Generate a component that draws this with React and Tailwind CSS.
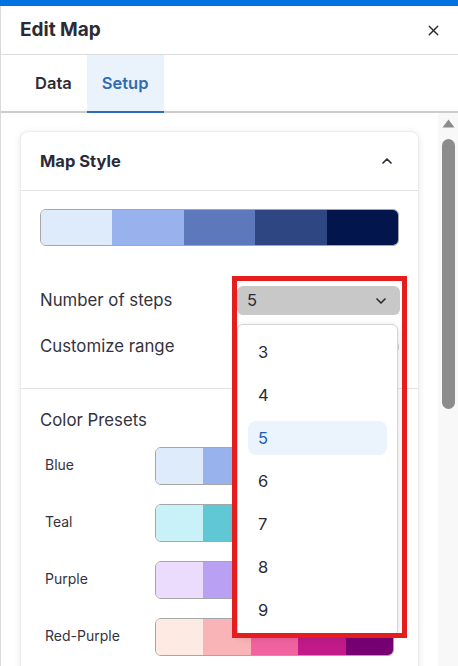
import React from 'react';
import { X, ChevronUp, ChevronDown } from 'lucide-react';

const mainScale = ['#deebfb', '#98b2ed', '#5e79bb', '#2e4682', '#02154c'];

const presets = [
  { name: 'Blue', colors: mainScale },
  { name: 'Teal', colors: ['#c8f2f7', '#60c7d4', '#2a9bb0', '#136b86', '#064058'] },
  { name: 'Purple', colors: ['#ebdcfe', '#b9a0f2', '#8a6ad8', '#5e3fb0', '#35207a'] },
  { name: 'Red-Purple', colors: ['#fdebe3', '#f9b4b8', '#f063a0', '#c21a88', '#770073'] },
];

const steps = [3, 4, 5, 6, 7, 8, 9];

const Swatch = ({ colors, className }) => (
  <div className={`flex overflow-hidden rounded-md border border-[#a6a6a6] ${className}`}>
    {colors.map((c) => (
      <div key={c} className="flex-1 h-full" style={{ backgroundColor: c }} />
    ))}
  </div>
);

const StepsSelect = () => (
  <div className="relative w-[163px] h-[29px] -mr-[1px]">
    <div className="h-full flex items-center justify-between pl-[10px] pr-[11px] rounded-md bg-[#c8c8c8] text-[16.5px] text-[#2b2b36]">
      <span>5</span>
      <ChevronDown className="w-4 h-4" strokeWidth={2.5} />
    </div>

    {/* open options list */}
    <div className="absolute left-0 top-[38px] w-[161px] h-[312px] z-10 bg-white border border-[#d4d4d4] rounded-md shadow-[0_2px_8px_rgba(0,0,0,0.12)] px-[10px] pt-[10px] flex flex-col gap-[9px]">
      {steps.map((n) => (
        <div
          key={n}
          className={`h-[34px] shrink-0 flex items-center pl-[10px] rounded-lg text-[16.5px] ${
            n === 5 ? 'bg-[#ebf3fc] text-[#1a5fb4]' : 'text-[#2b2b36]'
          }`}
        >
          {n}
        </div>
      ))}
    </div>

    {/* red annotation frame */}
    <div className="absolute -left-[5px] -top-[10px] w-[175px] h-[362px] z-20 border-[5px] border-[#e41e1e] pointer-events-none" />
  </div>
);

const App = () => {
  return (
    <div
      className="w-[458px] h-[666px] overflow-hidden bg-white flex flex-col"
      style={{ fontFamily: 'Inter, "Noto Sans", sans-serif' }}
    >
      <div className="h-[6px] bg-[#0073e0] shrink-0" />
      <div className="flex-1 flex flex-col border-l border-[#d9d9d9] min-h-0">
        {/* header */}
        <div className="h-[49px] shrink-0 flex items-center justify-between pl-[19px] pr-[16px] border-b border-[#dcdcdc]">
          <h1 className="text-[19px] font-bold text-[#2b2b36]">Edit Map</h1>
          <X className="w-[17px] h-[17px] text-[#2b2b36]" strokeWidth={2} />
        </div>

        {/* tabs */}
        <div className="h-[58px] shrink-0 flex pl-[19px] border-b-2 border-[#cccccc]">
          <div className="px-[15px] flex items-center text-[16.5px] font-semibold text-[#2b2b36]">Data</div>
          <div className="px-[15px] flex items-center text-[16.5px] font-semibold text-[#2e6db5] bg-[#eaf2fb] border-b-2 border-[#2e6db5] -mb-[2px]">
            Setup
          </div>
        </div>

        {/* content */}
        <div className="flex-1 flex min-h-0">
          <div className="flex-1 pl-[19px] pr-[19px] pt-[18px]">
            <div className="bg-white rounded-lg border border-[#ececec] shadow-[0_1px_6px_rgba(0,0,0,0.1)]">
              <div className="h-[59px] flex items-center justify-between px-[19px] border-b border-[#e3e3e3]">
                <h2 className="text-[16.5px] font-bold text-[#2b2b36]">Map Style</h2>
                <ChevronUp className="w-4 h-4 text-[#2b2b36] mr-[4px]" strokeWidth={2.5} />
              </div>

              <div className="px-[19px] pt-[18px] pb-[27px] border-b border-[#e3e3e3]">
                <Swatch colors={mainScale} className="h-[37px]" />
                <div className="mt-[40px] flex items-center justify-between">
                  <span className="text-[16.8px] text-[#33333d]">Number of steps</span>
                  <StepsSelect />
                </div>
                <div className="mt-[17px] h-[29px] flex items-center justify-between">
                  <span className="text-[16.8px] text-[#33333d]">Customize range</span>
                  <div className="w-[34px] h-[18px] rounded-full bg-[#cccccc]" />
                </div>
              </div>

              <div className="px-[19px] pt-[19px] pb-6">
                <div className="text-[16.8px] text-[#33333d] leading-6">Color Presets</div>
                <div className="mt-[15px] flex flex-col gap-[19px]">
                  {presets.map((p) => (
                    <div key={p.name} className="flex items-center">
                      <span className="w-[115px] pl-[5px] text-[14px] text-[#33333d] -mt-[4px]">{p.name}</span>
                      <Swatch colors={p.colors} className="w-[239px] h-[38px]" />
                    </div>
                  ))}
                </div>
              </div>
            </div>
          </div>

          {/* scrollbar */}
          <div className="w-[20px] shrink-0 bg-[#f8f8f8] flex flex-col items-center pt-[6px]">
            <svg width="13" height="9" viewBox="0 0 13 9">
              <path d="M6.5 0.5 L12.5 8.5 L0.5 8.5 Z" fill="#8c8c8c" />
            </svg>
            <div className="mt-[11px] w-[13px] h-[270px] rounded-full bg-[#8c8c8c]" />
          </div>
        </div>
      </div>
    </div>
  );
};

export default App;
